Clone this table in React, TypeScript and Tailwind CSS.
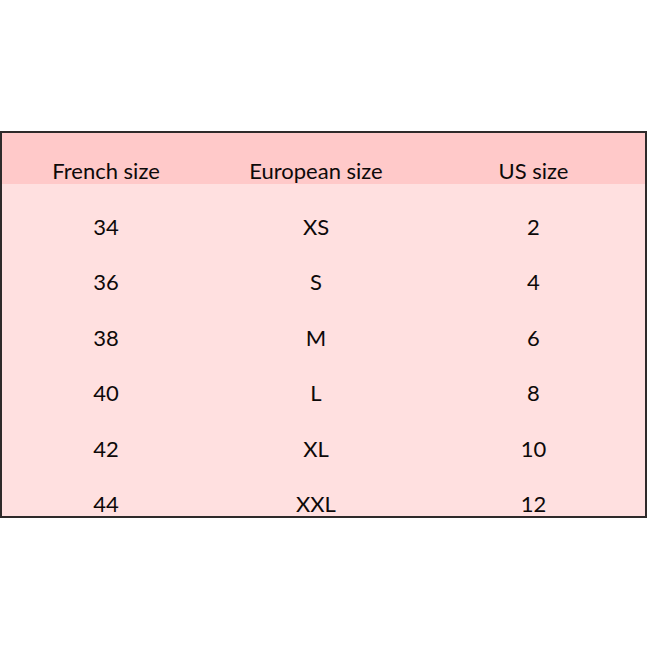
import React from "react";

const rows = [
  ["34", "XS", "2"],
  ["36", "S", "4"],
  ["38", "M", "6"],
  ["40", "L", "8"],
  ["42", "XL", "10"],
  ["44", "XXL", "12"],
];

export default function App() {
  return (
    <div className="w-[650px] h-[650px] bg-white pt-[131px] pl-[0px]" style={{ fontFamily: '"Lato", "Open Sans", sans-serif' }}>
      <div className="w-[647px] border-2 border-[#2e2a2a] bg-[#ffe0e0] text-[#0d0909] text-[22px]">
        <div className="grid grid-cols-[208px_212px_1fr] h-[51px] bg-[#ffc9c9]">
          <div className="text-center pt-[26px] leading-[24px]">French size</div>
          <div className="text-center pt-[26px] leading-[24px]">European size</div>
          <div className="text-center pt-[26px] leading-[24px]">US size</div>
        </div>
        {rows.map((r, i) => (
          <div key={i} className="grid grid-cols-[208px_212px_1fr] h-[55.4px]">
            {r.map((c, j) => (
              <div key={j} className="text-center pt-[31px] leading-[24px]">{c}</div>
            ))}
          </div>
        ))}
      </div>
    </div>
  );
}
